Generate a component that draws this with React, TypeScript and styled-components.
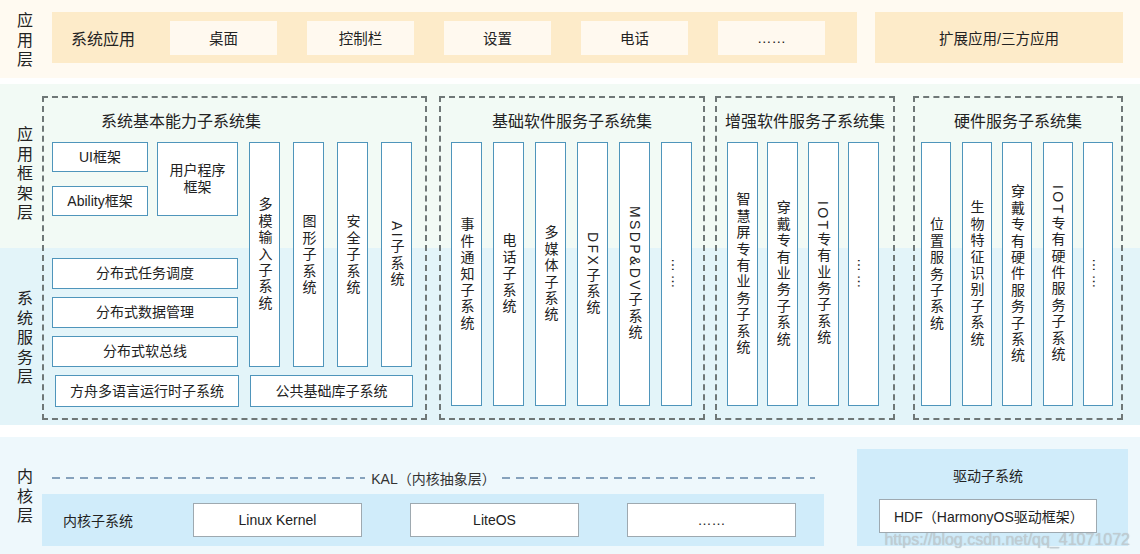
import styled, { createGlobalStyle } from "styled-components";

const GlobalStyle = createGlobalStyle`
  html, body {
    margin: 0;
    padding: 0;
    background: #fff;
  }
  body {
    font-family: "Liberation Sans", "Noto Sans CJK SC", sans-serif;
    color: #222;
  }
`;

const FONT = `"Liberation Sans", "Noto Sans CJK SC", sans-serif`;

/* ------ LAYOUT ------ */

const Page = styled.div`
  width: 1140px;
  height: 554px;
  display: flex;
  flex-direction: column;
  overflow: hidden;
  font-family: ${FONT};
`;

const LabelCol = styled.div`
  width: 42px;
  flex: 0 0 42px;
  display: flex;
  flex-direction: column;
`;

const LabelCell = styled.div<{ $h?: number; $pt?: number }>`
  flex: ${(p) => (p.$h ? `0 0 ${p.$h}px` : "1 1 auto")};
  box-sizing: border-box;
  padding: ${(p) => p.$pt || 0}px 0 0 4px;
  display: flex;
  align-items: center;
  justify-content: center;
`;

const LayerLabel = styled.div`
  writing-mode: vertical-rl;
  white-space: nowrap;
  font-size: 16px;
  line-height: 1;
  letter-spacing: 3.5px;
  color: #222;
`;

/* ------ APP LAYER ------ */

const AppBand = styled.div`
  height: 78px;
  flex: 0 0 78px;
  box-sizing: border-box;
  padding: 12px 17px 0 0;
  margin-bottom: 6px;
  background: #fffaf1;
  display: flex;
  align-items: flex-start;
`;

const SysApps = styled.div`
  width: 805px;
  flex: 0 0 805px;
  height: 51px;
  margin-left: 10px;
  box-sizing: border-box;
  padding-left: 19px;
  background: #fdebc9;
  display: flex;
  align-items: center;
  gap: 30px;
`;

const SysTitle = styled.div`
  width: 69px;
  font-size: 16px;
  white-space: nowrap;
`;

const AppItem = styled.div`
  width: 107px;
  height: 34px;
  background: #fff9ef;
  display: flex;
  align-items: center;
  justify-content: center;
  font-size: 14.5px;
`;

const ExtBox = styled.div`
  flex: 1;
  height: 51px;
  margin-left: 18px;
  background: #fdebc9;
  display: flex;
  align-items: center;
  justify-content: center;
  font-size: 14.5px;
`;

/* ------ FRAMEWORK + SERVICE LAYERS ------ */

const MiddleBand = styled.div`
  height: 341px;
  flex: 0 0 341px;
  margin-bottom: 12px;
  display: flex;
  background: linear-gradient(to bottom, #f2faf5 0, #f2faf5 164px, #e3f4f9 164px, #e3f4f9 100%);
`;

const Sections = styled.div`
  flex: 1;
  display: flex;
  box-sizing: border-box;
  padding: 12px 17px 5px 0;
`;

const Section = styled.div<{ $w: number; $ml?: number }>`
  width: ${(p) => p.$w}px;
  flex: 0 0 ${(p) => p.$w}px;
  margin-left: ${(p) => p.$ml || 0}px;
  box-sizing: border-box;
  border: 2px dashed #6f7777;
  display: flex;
  flex-direction: column;
`;

const SectionTitle = styled.div<{ $pr?: number }>`
  height: 44px;
  flex: 0 0 44px;
  box-sizing: border-box;
  padding-right: ${(p) => p.$pr || 0}px;
  display: flex;
  align-items: center;
  justify-content: center;
  font-size: 16px;
  white-space: nowrap;
`;

const CoreBody = styled.div`
  flex: 1;
  box-sizing: border-box;
  padding: 0 12px 11px 8px;
  display: flex;
  flex-direction: column;
`;

const CoreTop = styled.div`
  display: flex;
  gap: 11px;
`;

const LeftStack = styled.div`
  width: 186px;
  display: flex;
  flex-direction: column;
`;

const FrameRow = styled.div`
  height: 74px;
  display: flex;
  gap: 9px;
`;

const FrameStack = styled.div`
  width: 96px;
  display: flex;
  flex-direction: column;
  justify-content: space-between;
`;

const DistStack = styled.div`
  margin-top: 42px;
  display: flex;
  flex-direction: column;
  gap: 8px;
`;

const Box = styled.div<{ $w?: number; $h?: number }>`
  width: ${(p) => (p.$w ? `${p.$w}px` : "auto")};
  height: ${(p) => p.$h || 31}px;
  box-sizing: border-box;
  border: 1px solid #4f95bb;
  background: #fff;
  display: flex;
  align-items: center;
  justify-content: center;
  text-align: center;
  font-size: 14px;
  line-height: 17px;
  white-space: nowrap;
`;

const ColGroup = styled.div`
  display: flex;
  gap: 13px;
`;

const CoreBottom = styled.div`
  margin-top: 8px;
  padding-left: 3px;
  display: flex;
  gap: 11px;
`;

const ColumnsBody = styled.div<{ $pl: number; $pr: number }>`
  flex: 1;
  box-sizing: border-box;
  padding: 0 ${(p) => p.$pr}px 12px ${(p) => p.$pl}px;
  display: flex;
  justify-content: space-between;
`;

const Column = styled.div<{ $w?: number }>`
  width: ${(p) => p.$w || 31}px;
  flex: 0 0 ${(p) => p.$w || 31}px;
  box-sizing: border-box;
  border: 1px solid #4f95bb;
  background: #fff;
  display: flex;
  align-items: center;
  justify-content: center;
`;

const VText = styled.span`
  writing-mode: vertical-rl;
  text-orientation: mixed;
  font-size: 14px;
  line-height: 1;
  letter-spacing: 2.4px;
  color: #222;
  white-space: nowrap;
`;

/* ------ KERNEL LAYER ------ */

const KernelBand = styled.div`
  flex: 1;
  position: relative;
  display: flex;
  background: #eef8fc;
`;

const KernelMain = styled.div`
  width: 782px;
  flex: 0 0 782px;
  box-sizing: border-box;
  padding-top: 29px;
  display: flex;
  flex-direction: column;
`;

const KalRow = styled.div`
  height: 24px;
  margin: 0 9px 4px 10px;
  display: flex;
  align-items: center;
`;

const Dash = styled.div`
  flex: 1;
  height: 2px;
  background: repeating-linear-gradient(90deg, #86a2bc 0, #86a2bc 8px, transparent 8px, transparent 14px);
`;

const KalText = styled.div`
  padding: 0 6px;
  font-size: 14px;
  color: #333;
  white-space: nowrap;
`;

const KernelBar = styled.div`
  height: 52px;
  box-sizing: border-box;
  padding-left: 21px;
  background: #d0ecfa;
  display: flex;
  align-items: center;
`;

const KernelTitle = styled.div`
  width: 130px;
  font-size: 14px;
`;

const KernelItems = styled.div`
  display: flex;
  gap: 48px;
`;

const KernelItem = styled.div`
  width: 169px;
  height: 34px;
  box-sizing: border-box;
  border: 1px solid #9ea9b0;
  background: #fff;
  display: flex;
  align-items: center;
  justify-content: center;
  font-size: 14px;
`;

const DriverBox = styled.div`
  width: 271px;
  flex: 0 0 271px;
  height: 97px;
  margin: 12px 0 0 33px;
  box-sizing: border-box;
  padding: 17px 9px 0 0;
  background: #d0ecfa;
  display: flex;
  flex-direction: column;
  align-items: center;
`;

const DriverTitle = styled.div`
  height: 20px;
  line-height: 20px;
  font-size: 14px;
`;

const HdfBox = styled.div`
  width: 218px;
  height: 34px;
  margin-top: 13px;
  box-sizing: border-box;
  padding-left: 14px;
  border: 1px solid #9ea9b0;
  background: #fff;
  display: flex;
  align-items: center;
  font-size: 14px;
  white-space: nowrap;
`;

const Watermark = styled.div`
  position: absolute;
  right: 10px;
  bottom: 5px;
  font-family: "Liberation Sans", sans-serif;
  font-size: 16px;
  color: rgba(196, 205, 210, 0.9);
  text-shadow: 0 0 1px rgba(120, 132, 138, 0.45);
  pointer-events: none;
  white-space: nowrap;
`;

/* ------ DATA ------ */

const APPS = ["桌面", "控制栏", "设置", "电话", "……"];
const CORE_COLUMNS = ["多模输入子系统", "图形子系统", "安全子系统", "AI子系统"];
const DISTRIBUTED = ["分布式任务调度", "分布式数据管理", "分布式软总线"];
const BASIC = ["事件通知子系统", "电话子系统", "多媒体子系统", "DFX子系统", "MSDP&DV子系统", "……"];
const ENHANCED = ["智慧屏专有业务子系统", "穿戴专有业务子系统", "IOT专有业务子系统", "……"];
const HARDWARE = ["位置服务子系统", "生物特征识别子系统", "穿戴专有硬件服务子系统", "IOT专有硬件服务子系统", "……"];
const KERNELS = ["Linux Kernel", "LiteOS", "……"];

export default function App() {
  return (
    <>
      <GlobalStyle />
      <Page>
        <AppBand>
          <LabelCol>
            <LabelCell $h={51}>
              <LayerLabel>应用层</LayerLabel>
            </LabelCell>
          </LabelCol>
          <SysApps>
            <SysTitle>系统应用</SysTitle>
            {APPS.map((a) => (
              <AppItem key={a}>{a}</AppItem>
            ))}
          </SysApps>
          <ExtBox>扩展应用/三方应用</ExtBox>
        </AppBand>

        <MiddleBand>
          <LabelCol>
            <LabelCell $h={164} $pt={18}>
              <LayerLabel>应用框架层</LayerLabel>
            </LabelCell>
            <LabelCell $pt={5}>
              <LayerLabel>系统服务层</LayerLabel>
            </LabelCell>
          </LabelCol>

          <Sections>
            <Section $w={385}>
              <SectionTitle $pr={107}>系统基本能力子系统集</SectionTitle>
              <CoreBody>
                <CoreTop>
                  <LeftStack>
                    <FrameRow>
                      <FrameStack>
                        <Box $h={30}>UI框架</Box>
                        <Box $h={30}>Ability框架</Box>
                      </FrameStack>
                      <Box $w={81} $h={74}>
                        用户程序
                        <br />
                        框架
                      </Box>
                    </FrameRow>
                    <DistStack>
                      {DISTRIBUTED.map((d) => (
                        <Box key={d}>{d}</Box>
                      ))}
                    </DistStack>
                  </LeftStack>
                  <ColGroup>
                    {CORE_COLUMNS.map((c) => (
                      <Column key={c}>
                        <VText>{c}</VText>
                      </Column>
                    ))}
                  </ColGroup>
                </CoreTop>
                <CoreBottom>
                  <Box $w={184} $h={32}>方舟多语言运行时子系统</Box>
                  <Box $w={163} $h={32}>公共基础库子系统</Box>
                </CoreBottom>
              </CoreBody>
            </Section>

            <Section $w={266} $ml={12}>
              <SectionTitle>基础软件服务子系统集</SectionTitle>
              <ColumnsBody $pl={10} $pr={11}>
                {BASIC.map((c, i) => (
                  <Column key={i}>
                    <VText>{c}</VText>
                  </Column>
                ))}
              </ColumnsBody>
            </Section>

            <Section $w={180} $ml={10}>
              <SectionTitle>增强软件服务子系统集</SectionTitle>
              <ColumnsBody $pl={10} $pr={14}>
                {ENHANCED.map((c, i) => (
                  <Column key={i}>
                    <VText>{c}</VText>
                  </Column>
                ))}
              </ColumnsBody>
            </Section>

            <Section $w={210} $ml={18}>
              <SectionTitle>硬件服务子系统集</SectionTitle>
              <ColumnsBody $pl={6} $pr={8}>
                {HARDWARE.map((c, i) => (
                  <Column key={i} $w={30}>
                    <VText>{c}</VText>
                  </Column>
                ))}
              </ColumnsBody>
            </Section>
          </Sections>
        </MiddleBand>

        <KernelBand>
          <LabelCol>
            <LabelCell $pt={4}>
              <LayerLabel>内核层</LayerLabel>
            </LabelCell>
          </LabelCol>
          <KernelMain>
            <KalRow>
              <Dash />
              <KalText>KAL（内核抽象层）</KalText>
              <Dash />
            </KalRow>
            <KernelBar>
              <KernelTitle>内核子系统</KernelTitle>
              <KernelItems>
                {KERNELS.map((k) => (
                  <KernelItem key={k}>{k}</KernelItem>
                ))}
              </KernelItems>
            </KernelBar>
          </KernelMain>
          <DriverBox>
            <DriverTitle>驱动子系统</DriverTitle>
            <HdfBox>HDF（HarmonyOS驱动框架）</HdfBox>
          </DriverBox>
          <Watermark>https://blog.csdn.net/qq_41071072</Watermark>
        </KernelBand>
      </Page>
    </>
  );
}
